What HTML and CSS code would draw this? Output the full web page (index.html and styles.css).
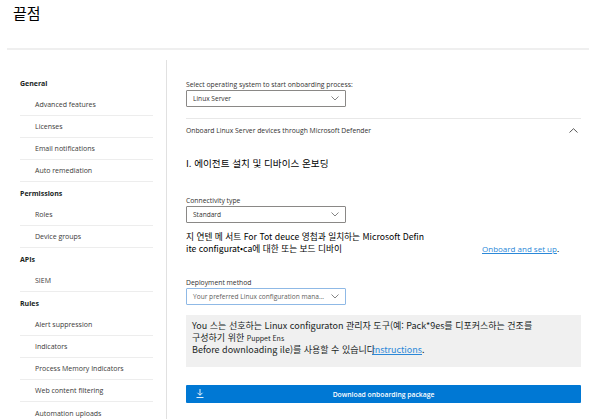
FILE: index.html
```html
<!DOCTYPE html>
<html lang="ko">
<head>
<meta charset="utf-8">
<title>끝점</title>
<link rel="stylesheet" href="styles.css">
</head>
<body>
<header class="top">
  <h1 class="title">끝점</h1>
</header>
<div class="layout">
  <nav class="side">
    <div class="grp">General</div>
    <div class="item">Advanced features</div>
    <div class="item">Licenses</div>
    <div class="item">Email notifications</div>
    <div class="item">Auto remediation</div>
    <div class="grp">Permissions</div>
    <div class="item">Roles</div>
    <div class="item">Device groups</div>
    <div class="grp">APIs</div>
    <div class="item">SIEM</div>
    <div class="grp">Rules</div>
    <div class="item">Alert suppression</div>
    <div class="item">Indicators</div>
    <div class="item">Process Memory Indicators</div>
    <div class="item">Web content filtering</div>
    <div class="item last">Automation uploads</div>
  </nav>
  <main class="main">
    <div class="lbl first">Select operating system to start onboarding process:</div>
    <div class="sel"><span>Linux Server</span><svg class="chev" viewBox="0 0 8 5" width="8" height="5"><path d="M0.5 0.5 L4 4 L7.5 0.5" fill="none" stroke="#666" stroke-width="0.8"/></svg></div>
    <div class="acc">
      <span>Onboard Linux Server devices through Microsoft Defender</span>
      <svg class="up" viewBox="0 0 9 5" width="9" height="5"><path d="M0.5 4.5 L4.5 0.7 L8.5 4.5" fill="none" stroke="#444" stroke-width="0.9"/></svg>
    </div>
    <div class="sec">I. 에이전트 설치 및 디바이스 온보딩</div>
    <div class="lbl l2">Connectivity type</div>
    <div class="sel"><span>Standard</span><svg class="chev" viewBox="0 0 8 5" width="8" height="5"><path d="M0.5 0.5 L4 4 L7.5 0.5" fill="none" stroke="#666" stroke-width="0.8"/></svg></div>
    <div class="para">
      <div class="ptext">지 연텐 메 서트 For Tot deuce 영첩과 일치하는 Microsoft Defin<br>ite configurat•ca에 대한 또는 보드 디바이</div>
      <a class="link setup" href="#">Onboard and set up</a><span class="dot">.</span>
    </div>
    <div class="lbl l3">Deployment method</div>
    <div class="sel focus"><span class="ph">Your preferred Linux configuration mana...</span><svg class="chev" viewBox="0 0 8 5" width="8" height="5"><path d="M0.5 0.5 L4 4 L7.5 0.5" fill="none" stroke="#666" stroke-width="0.8"/></svg></div>
    <div class="note">
      You 스는 선호하는 Linux configuraton 관리자 도구(예: Pack*9es를 디포커스하는 건조를<br>구성하기 위한 <span class="sm">Puppet Ens</span><br>Before downloading ile)를 사용할 수 있습니다<a class="link ins" href="#">Instructions</a>.
    </div>
    <button class="dl" type="button">
      <svg class="dlicon" viewBox="0 0 8 9" width="8" height="9"><path d="M4 0 V6 M1.5 3.8 L4 6.3 L6.5 3.8 M0.5 8.5 H7.5" fill="none" stroke="#fff" stroke-width="0.9"/></svg>
      <span>Download onboarding package</span>
    </button>
  </main>
</div>
</body>
</html>
```
FILE: styles.css
```css
* { box-sizing: border-box; }
html, body { margin: 0; padding: 0; background: #fff; }
body {
  font-family: "Open Sans", "Noto Sans CJK KR", sans-serif;
  color: #201f1e;
  width: 589px;
  height: 419px;
  overflow: hidden;
}
.top {
  margin-left: 7px;
  height: 50px;
  border-bottom: 2px solid #efefef;
  padding: 3px 0 0 6px;
}
.title {
  margin: 0;
  font-family: "Noto Sans CJK KR", sans-serif;
  font-weight: 400;
  font-size: 15px;
  line-height: 20px;
  color: #000;
}
.layout {
  display: flex;
  margin-left: 7px;
  margin-top: 10px;
}
.side {
  width: 160px;
  flex: none;
  border-right: 1px solid #e1e1e1;
  padding: 12px 13px 0 13px;
  height: 370px;
}
.grp, .item {
  height: 22px;
  display: flex;
  align-items: center;
  font-size: 7px;
  color: #3b3a39;
}
.grp { font-weight: 700; color: #201f1e; }
.item { padding-left: 15px; border-bottom: 1px solid #ededed; }
.item.last { border-bottom: none; }
.main {
  flex: 1;
  padding: 20px 8px 0 19px;
}
.lbl {
  font-size: 6.8px;
  line-height: 10px;
  color: #323130;
}
.lbl.l2 { margin-top: 26px; }
.lbl.l3 { margin-top: 23px; }
.sel {
  width: 160px;
  height: 17px;
  border: 1px solid #8a8886;
  border-radius: 1px;
  display: flex;
  align-items: center;
  justify-content: space-between;
  padding: 0 6px 0 6px;
  font-size: 6.6px;
  color: #323130;
}
.sel.focus { border-color: #8fb9e6; }
.sel .ph { color: #605e5c; }
.chev { flex: none; }
.acc {
  margin-top: 11px;
  border-top: 1px solid #e8e8e8;
  height: 23px;
  display: flex;
  align-items: center;
  justify-content: space-between;
  padding-right: 3px;
  font-size: 6.8px;
  color: #323130;
}
.sec {
  margin-top: 15px;
  font-family: "Noto Sans CJK KR", sans-serif;
  font-size: 9.6px;
  line-height: 14px;
  color: #000;
}
.para {
  margin-top: 8px;
  display: flex;
  align-items: flex-end;
  font-family: "Noto Sans CJK KR", sans-serif;
  font-size: 8.7px;
  line-height: 12px;
  color: #000;
}
.ptext { width: 296px; }
.link { color: #2b88d8; text-decoration: underline; }
.setup { font-family: "Open Sans", sans-serif; font-size: 8px; }
.dot { font-size: 8px; }
.note {
  margin-top: 10px;
  background: #f0f0f0;
  height: 52px;
  padding: 5px 6px;
  font-family: "Noto Sans CJK KR", sans-serif;
  font-size: 9px;
  line-height: 11.5px;
  color: #201f1e;
  white-space: nowrap;
}
.note .sm { font-size: 7px; }
.ins { margin-left: -3px; }
.dl {
  margin-top: 18px;
  width: 100%;
  height: 18px;
  border: none;
  border-radius: 1px;
  background: #0078d4;
  color: #fff;
  font-family: "Open Sans", sans-serif;
  font-weight: 600;
  font-size: 6.8px;
  display: flex;
  align-items: center;
  padding: 0 10px;
  position: relative;
  justify-content: center;
}
.dlicon { position: absolute; left: 10px; top: 4px; }
```
